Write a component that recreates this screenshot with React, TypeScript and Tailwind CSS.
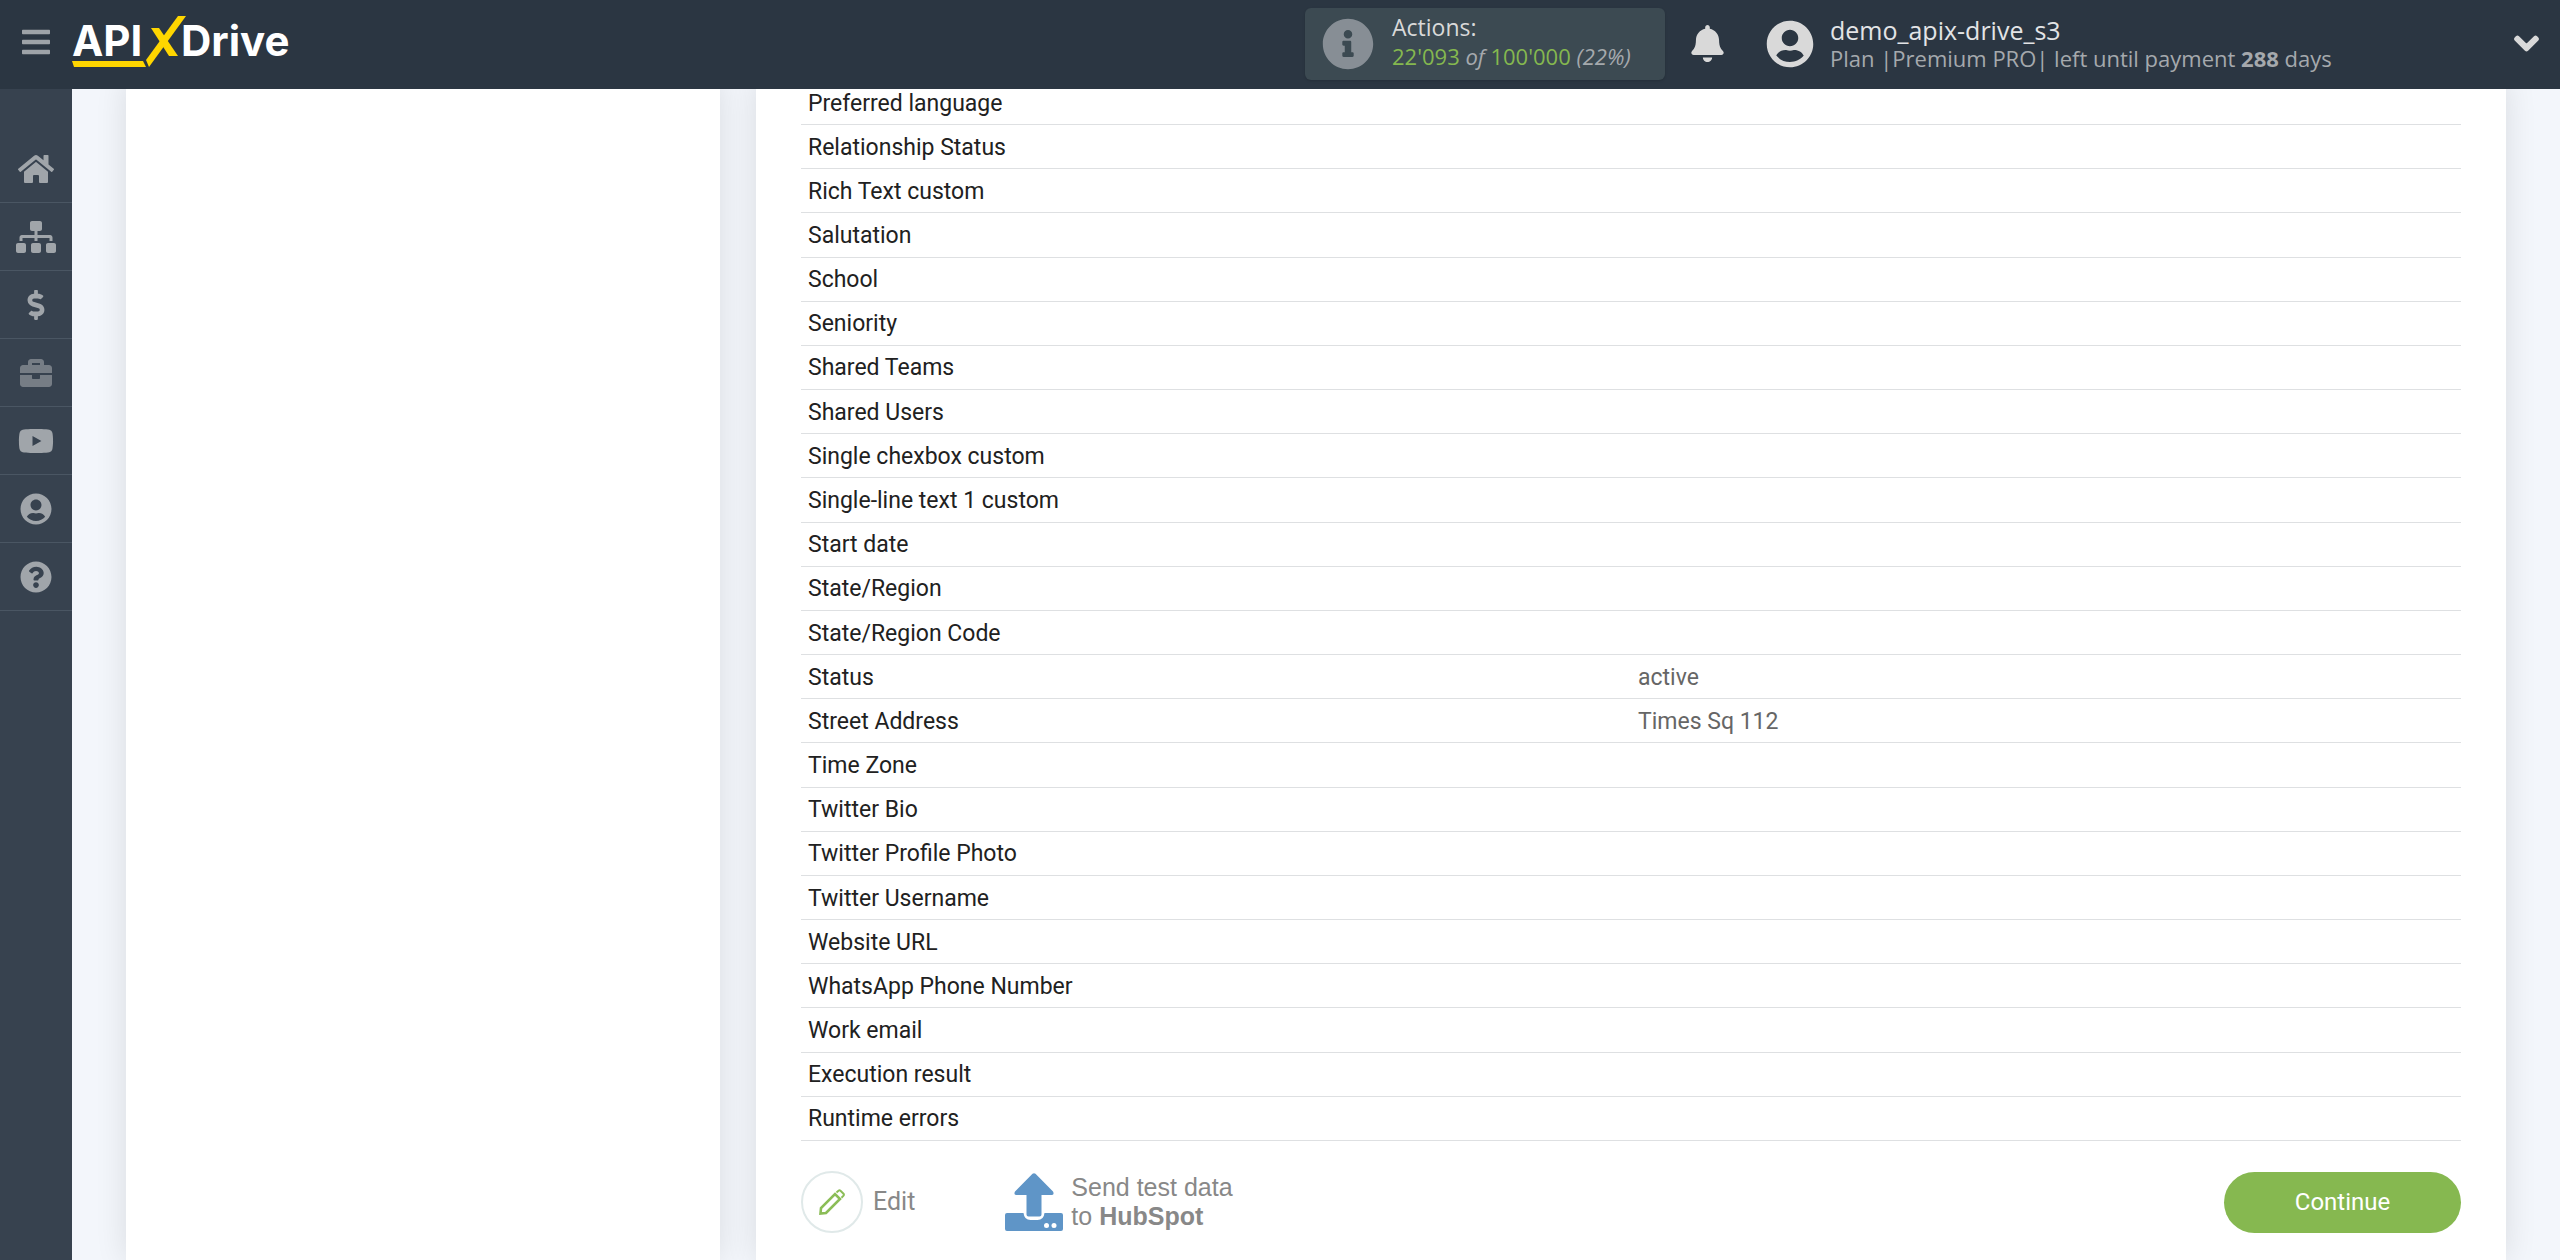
import React from 'react';
import {
  FaBars,
  FaBell,
  FaBriefcase,
  FaChevronDown,
  FaDollarSign,
  FaHome,
  FaInfoCircle,
  FaQuestionCircle,
  FaSitemap,
  FaUserCircle,
  FaYoutube,
} from 'react-icons/fa';

interface Field {
  name: string;
  value?: string;
}

const fields: Field[] = [
  { name: 'Preferred language' },
  { name: 'Relationship Status' },
  { name: 'Rich Text custom' },
  { name: 'Salutation' },
  { name: 'School' },
  { name: 'Seniority' },
  { name: 'Shared Teams' },
  { name: 'Shared Users' },
  { name: 'Single chexbox custom' },
  { name: 'Single-line text 1 custom' },
  { name: 'Start date' },
  { name: 'State/Region' },
  { name: 'State/Region Code' },
  { name: 'Status', value: 'active' },
  { name: 'Street Address', value: 'Times Sq 112' },
  { name: 'Time Zone' },
  { name: 'Twitter Bio' },
  { name: 'Twitter Profile Photo' },
  { name: 'Twitter Username' },
  { name: 'Website URL' },
  { name: 'WhatsApp Phone Number' },
  { name: 'Work email' },
  { name: 'Execution result' },
  { name: 'Runtime errors' },
];

const menu = [
  { label: 'Home', icon: <FaHome className="h-8 w-9" /> },
  { label: 'Connections', icon: <FaSitemap className="h-8 w-10" /> },
  { label: 'Billing', icon: <FaDollarSign className="h-[30px] w-[30px]" /> },
  { label: 'Business', icon: <FaBriefcase className="h-8 w-8 opacity-60" /> },
  { label: 'Video', icon: <FaYoutube className="h-9 w-9" /> },
  { label: 'Profile', icon: <FaUserCircle className="h-8 w-8" /> },
  { label: 'Help', icon: <FaQuestionCircle className="h-8 w-8" /> },
];

const Logo: React.FC = () => (
  <svg viewBox="0 0 222 54" className="h-[54px] w-[222px]" role="img" aria-label="APIXDrive">
    <g fill="#ffffff" fontFamily="Inter, sans-serif" fontSize="42" fontWeight="700">
      <text x="0" y="41">API</text>
      <text x="109" y="41">Drive</text>
    </g>
    <g fill="#ffd600">
      <path d="M106 1h8L77 52l-3-7z" />
      <path d="M79 13h8l19 28h-9z" />
      <path d="M0 46h71l3 6H2z" />
    </g>
  </svg>
);

const Header: React.FC = () => (
  <header className="relative z-10 flex h-[89px] items-center bg-[#2b3642] pb-0.5 font-['Open_Sans',sans-serif] text-[#d9d9d9]">
    <button type="button" aria-label="Menu" className="mb-1 flex w-[72px] justify-center text-[#9ea3a8]">
      <FaBars className="h-8 w-8" />
    </button>
    <a href="#" className="mb-1 block">
      <Logo />
    </a>

    <div className="ml-auto flex h-[72px] w-[360px] items-center gap-[18px] rounded-md bg-[#3c4a52] pl-[17px] shadow">
      <FaInfoCircle className="h-[52px] w-[52px] text-[#878e95]" />
      <div className="pb-1 text-[22px] leading-[29px]">
        <div className="text-[23px]">Actions:</div>
        <div className="text-[#a5a9ad]">
          <span className="text-[#85b84f]">22'093</span> <i>of</i>{' '}
          <span className="text-[#85b84f]">100'000</span> <i>(22%)</i>
        </div>
      </div>
    </div>

    <button type="button" aria-label="Notifications" className="ml-6">
      <FaBell className="h-[37px] w-[37px]" />
    </button>

    <button type="button" className="ml-10 flex w-[794px] items-center text-left">
      <FaUserCircle className="h-12 w-12" />
      <span className="ml-4">
        <span className="block text-[25px] leading-7 text-[#e3e4e6]">demo_apix-drive_s3</span>
        <span className="block text-[22px] leading-7 text-[#a5a9ad]">
          Plan |Premium PRO| left until payment <b>288</b> days
        </span>
      </span>
      <FaChevronDown className="mr-5 ml-auto h-[27px] w-[27px]" strokeWidth="36" stroke="currentColor" />
    </button>
  </header>
);

const Sidebar: React.FC = () => (
  <nav className="w-[72px] shrink-0 bg-[#37424f] pt-[54px] text-[#a0a5aa]">
    {menu.map((item) => (
      <a
        key={item.label}
        href="#"
        aria-label={item.label}
        className="flex h-[68px] items-center justify-center border-b border-[#4a5663]"
      >
        {item.icon}
      </a>
    ))}
  </nav>
);

const PencilIcon: React.FC = () => (
  <svg viewBox="0 0 26 26" className="h-[26px] w-[26px]" fill="none" stroke="#8bbd57">
    <path d="M1.5 24.5l.5-5.500L16 5l5 5L7 24z" strokeWidth="2.600" />
    <path d="M17.500 3.500l2-1.800q1-.8 2 0l3 3q.8 1 0 2l-2 2" strokeWidth="2" />
  </svg>
);

const UploadIcon: React.FC = () => (
  <svg viewBox="0 0 58 58" className="h-[58px] w-[58px]" fill="#5f95c7">
    <path d="M27.500.8q1.500-1.300 3 0L48 18.500q1.500 3-1 3.500H36.500v19.500q0 2-2 2h-11q-2 0-2-2V22H11q-2.500-.5-1-3.500z" />
    <path d="M2 40h16.500q.8 7 7 7h7q6.200 0 7-7H56q2 0 2 2v14q0 2-2 2H2q-2 0-2-2V42q0-2 2-2z" />
    <circle cx="41.500" cy="52.500" r="2.500" fill="#fff" />
    <circle cx="49" cy="52.500" r="2.500" fill="#fff" />
  </svg>
);

const FieldsTable: React.FC = () => (
  <table className="h-[1060px] w-full table-fixed text-left text-[23px] leading-8">
    <tbody>
      {fields.map((field) => (
        <tr key={field.name} className="border-b border-[#dee0e2]">
          <th scope="row" className="px-[7px] pt-0.5 font-normal text-[#212121]">
            {field.name}
          </th>
          <td className="px-[7px] pt-0.5 text-[#666666]">{field.value}</td>
        </tr>
      ))}
    </tbody>
  </table>
);

const App: React.FC = () => (
  <div className="flex h-screen flex-col overflow-hidden bg-[#f3f6fb] font-[Roboto,sans-serif]">
    <Header />
    {/* the page is scrolled, so the first row starts under the header */}
    <div className="-mt-2 flex flex-1">
      <Sidebar />
      <main className="grid flex-1 grid-cols-[297fr_875fr] gap-9 px-[54px]">
        <aside className="bg-white shadow-[0_0_30px_rgba(0,0,0,0.11)]" />
        <section className="bg-white px-[45px] shadow-[0_0_30px_rgba(0,0,0,0.11)]">
          <FieldsTable />
          <div className="mt-[30px] flex items-center text-[25px] text-[#888888]">
            <button type="button" className="flex items-center gap-[10px]">
              <span className="flex h-[62px] w-[62px] items-center justify-center rounded-full border-2 border-[#e0e9e9]">
                <PencilIcon />
              </span>
              Edit
            </button>
            <button
              type="button"
              className="ml-[90px] flex items-center gap-2 text-left font-['Liberation_Sans',sans-serif] leading-[29px]"
            >
              <UploadIcon />
              <span>
                Send test data
                <br />
                to <b>HubSpot</b>
              </span>
            </button>
            <button
              type="button"
              className="ml-auto h-[61px] w-[237px] rounded-full bg-[#86b850] text-2xl text-white"
            >
              Continue
            </button>
          </div>
        </section>
      </main>
    </div>
  </div>
);

export default App;
